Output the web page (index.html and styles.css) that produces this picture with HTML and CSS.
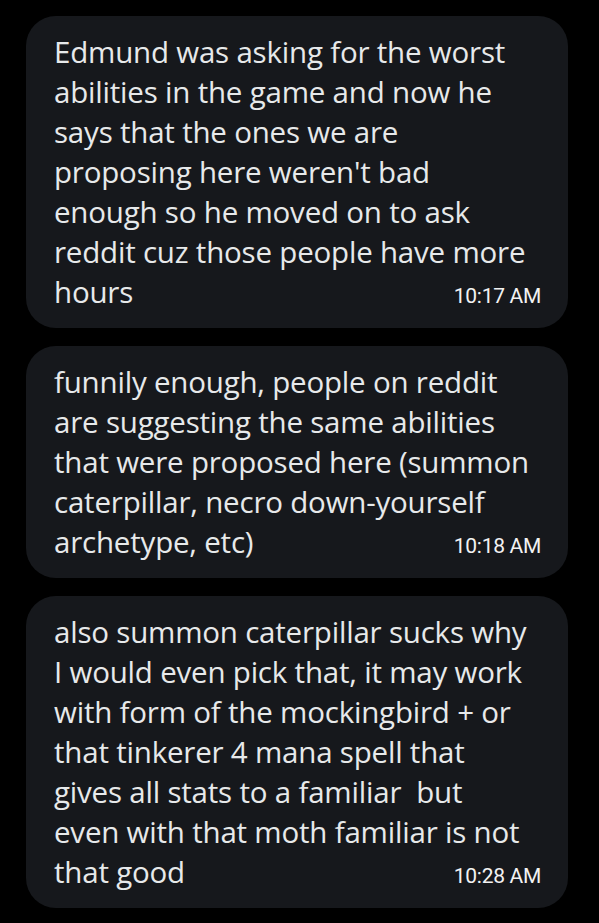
FILE: index.html
```html
<!DOCTYPE html>
<html lang="en">
  <head>
    <meta charset="UTF-8" />
    <meta name="viewport" content="width=device-width, initial-scale=1.0" />
    <title>messages</title>
    <link rel="stylesheet" href="styles.css">
  </head>
  <body>
    <div class="thread">
      <!-- 10:17 -->
      <div class="bubble">
        <p class="msg">Edmund was asking for the worst<br />
          abilities in the game and now he<br />
          says that the ones we are<br />
          proposing here weren't bad<br />
          enough so he moved on to ask<br />
          reddit cuz those people have more</p>
        <div class="last">
          <span class="msg">hours</span>
          <span class="time">10:17 AM</span>
        </div>
      </div>

      <!-- 10:18 -->
      <div class="bubble">
        <p class="msg">funnily enough, people on reddit<br />
          are suggesting the same abilities<br />
          that were proposed here (summon<br />
          caterpillar, necro down-yourself</p>
        <div class="last">
          <span class="msg">archetype, etc)</span>
          <span class="time">10:18 AM</span>
        </div>
      </div>

      <!-- 10:28 -->
      <div class="bubble">
        <p class="msg">also summon caterpillar sucks why<br />
          I would even pick that, it may work<br />
          with form of the mockingbird + or<br />
          that tinkerer 4 mana spell that<br />
          gives all stats to a familiar&nbsp; but<br />
          even with that moth familiar is not</p>
        <div class="last">
          <span class="msg">that good</span>
          <span class="time">10:28 AM</span>
        </div>
      </div>
    </div>
  </body>
</html>
```

FILE: styles.css
```css
body {
  margin: 0;
  background: #000;
}

.thread {
  display: flex;
  flex-direction: column;
  gap: 18px;
  padding: 16px 31px 15px 26px;
}

.bubble {
  background-color: #16181c;
  border-radius: 30px;
  padding: 16px 27px 16px 28px;
}

.msg {
  margin: 0;
  font-family: "Open Sans", "Noto Sans", sans-serif;
  font-size: 29.5px;
  letter-spacing: -0.2px;
  line-height: 40px;
  color: #e7e9ea;
  white-space: nowrap;
}

.last {
  display: flex;
  justify-content: space-between;
  align-items: baseline;
}

.time {
  font-family: Roboto, "Liberation Sans", sans-serif;
  font-size: 21px;
  letter-spacing: -0.3px;
  color: #f2f2f2;
}
```
